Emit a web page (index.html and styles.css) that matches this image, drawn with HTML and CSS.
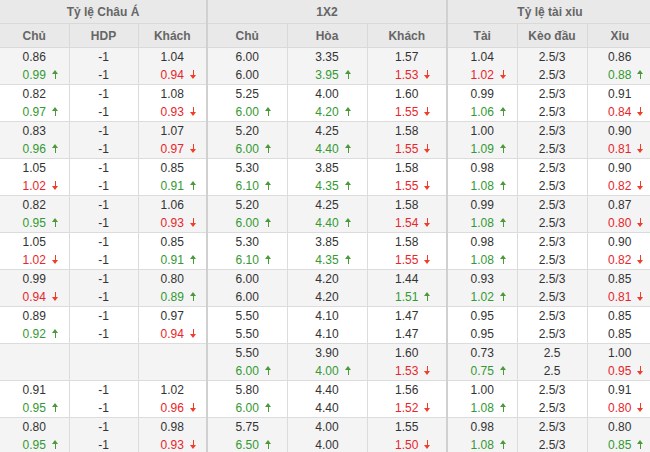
FILE: index.html
```html
<!DOCTYPE html>
<html lang="vi">
<head>
<meta charset="utf-8">
<title>Odds</title>
<link rel="stylesheet" href="styles.css">
</head>
<body>
<table class="odds">
  <colgroup>
    <col class="c1"><col class="c1"><col class="c1">
    <col class="c2"><col class="c2"><col class="c2">
    <col class="c3"><col class="c3"><col class="c4">
  </colgroup>
  <thead>
    <tr class="grp">
      <th colspan="3" class="gend">Tỷ lệ Châu Á</th>
      <th colspan="3" class="gend">1X2</th>
      <th colspan="3">Tỷ lệ tài xỉu</th>
    </tr>
    <tr class="sub">
      <th>Chủ</th><th>HDP</th><th class="gend">Khách</th>
      <th>Chủ</th><th>Hòa</th><th class="gend">Khách</th>
      <th>Tài</th><th>Kèo đầu</th><th>Xỉu</th>
    </tr>
  </thead>
  <tbody>
    <tr class="alt">
      <td><div>0.86</div><div class="up"><span class="v">0.99</span></div></td>
      <td><div>-1</div><div>-1</div></td>
      <td class="gend"><div>1.04</div><div class="dn"><span class="v">0.94</span></div></td>
      <td><div>6.00</div><div>6.00</div></td>
      <td><div>3.35</div><div class="up"><span class="v">3.95</span></div></td>
      <td class="gend"><div>1.57</div><div class="dn"><span class="v">1.53</span></div></td>
      <td><div>1.04</div><div class="dn"><span class="v">1.02</span></div></td>
      <td><div>2.5/3</div><div>2.5/3</div></td>
      <td><div>0.86</div><div class="up"><span class="v">0.88</span></div></td>
    </tr>
    <tr>
      <td><div>0.82</div><div class="up"><span class="v">0.97</span></div></td>
      <td><div>-1</div><div>-1</div></td>
      <td class="gend"><div>1.08</div><div class="dn"><span class="v">0.93</span></div></td>
      <td><div>5.25</div><div class="up"><span class="v">6.00</span></div></td>
      <td><div>4.00</div><div class="up"><span class="v">4.20</span></div></td>
      <td class="gend"><div>1.60</div><div class="dn"><span class="v">1.55</span></div></td>
      <td><div>0.99</div><div class="up"><span class="v">1.06</span></div></td>
      <td><div>2.5/3</div><div>2.5/3</div></td>
      <td><div>0.91</div><div class="dn"><span class="v">0.84</span></div></td>
    </tr>
    <tr class="alt">
      <td><div>0.83</div><div class="up"><span class="v">0.96</span></div></td>
      <td><div>-1</div><div>-1</div></td>
      <td class="gend"><div>1.07</div><div class="dn"><span class="v">0.97</span></div></td>
      <td><div>5.20</div><div class="up"><span class="v">6.00</span></div></td>
      <td><div>4.25</div><div class="up"><span class="v">4.40</span></div></td>
      <td class="gend"><div>1.58</div><div class="dn"><span class="v">1.55</span></div></td>
      <td><div>1.00</div><div class="up"><span class="v">1.09</span></div></td>
      <td><div>2.5/3</div><div>2.5/3</div></td>
      <td><div>0.90</div><div class="dn"><span class="v">0.81</span></div></td>
    </tr>
    <tr>
      <td><div>1.05</div><div class="dn"><span class="v">1.02</span></div></td>
      <td><div>-1</div><div>-1</div></td>
      <td class="gend"><div>0.85</div><div class="up"><span class="v">0.91</span></div></td>
      <td><div>5.30</div><div class="up"><span class="v">6.10</span></div></td>
      <td><div>3.85</div><div class="up"><span class="v">4.35</span></div></td>
      <td class="gend"><div>1.58</div><div class="dn"><span class="v">1.55</span></div></td>
      <td><div>0.98</div><div class="up"><span class="v">1.08</span></div></td>
      <td><div>2.5/3</div><div>2.5/3</div></td>
      <td><div>0.90</div><div class="dn"><span class="v">0.82</span></div></td>
    </tr>
    <tr class="alt">
      <td><div>0.82</div><div class="up"><span class="v">0.95</span></div></td>
      <td><div>-1</div><div>-1</div></td>
      <td class="gend"><div>1.06</div><div class="dn"><span class="v">0.93</span></div></td>
      <td><div>5.20</div><div class="up"><span class="v">6.00</span></div></td>
      <td><div>4.25</div><div class="up"><span class="v">4.40</span></div></td>
      <td class="gend"><div>1.58</div><div class="dn"><span class="v">1.54</span></div></td>
      <td><div>0.99</div><div class="up"><span class="v">1.08</span></div></td>
      <td><div>2.5/3</div><div>2.5/3</div></td>
      <td><div>0.87</div><div class="dn"><span class="v">0.80</span></div></td>
    </tr>
    <tr>
      <td><div>1.05</div><div class="dn"><span class="v">1.02</span></div></td>
      <td><div>-1</div><div>-1</div></td>
      <td class="gend"><div>0.85</div><div class="up"><span class="v">0.91</span></div></td>
      <td><div>5.30</div><div class="up"><span class="v">6.10</span></div></td>
      <td><div>3.85</div><div class="up"><span class="v">4.35</span></div></td>
      <td class="gend"><div>1.58</div><div class="dn"><span class="v">1.55</span></div></td>
      <td><div>0.98</div><div class="up"><span class="v">1.08</span></div></td>
      <td><div>2.5/3</div><div>2.5/3</div></td>
      <td><div>0.90</div><div class="dn"><span class="v">0.82</span></div></td>
    </tr>
    <tr class="alt">
      <td><div>0.99</div><div class="dn"><span class="v">0.94</span></div></td>
      <td><div>-1</div><div>-1</div></td>
      <td class="gend"><div>0.80</div><div class="up"><span class="v">0.89</span></div></td>
      <td><div>6.00</div><div>6.00</div></td>
      <td><div>4.20</div><div>4.20</div></td>
      <td class="gend"><div>1.44</div><div class="up"><span class="v">1.51</span></div></td>
      <td><div>0.93</div><div class="up"><span class="v">1.02</span></div></td>
      <td><div>2.5/3</div><div>2.5/3</div></td>
      <td><div>0.85</div><div class="dn"><span class="v">0.81</span></div></td>
    </tr>
    <tr>
      <td><div>0.89</div><div class="up"><span class="v">0.92</span></div></td>
      <td><div>-1</div><div>-1</div></td>
      <td class="gend"><div>0.97</div><div class="dn"><span class="v">0.94</span></div></td>
      <td><div>5.50</div><div>5.50</div></td>
      <td><div>4.10</div><div>4.10</div></td>
      <td class="gend"><div>1.47</div><div>1.47</div></td>
      <td><div>0.95</div><div>0.95</div></td>
      <td><div>2.5/3</div><div>2.5/3</div></td>
      <td><div>0.85</div><div>0.85</div></td>
    </tr>
    <tr class="alt">
      <td></td>
      <td></td>
      <td class="gend"></td>
      <td><div>5.50</div><div class="up"><span class="v">6.00</span></div></td>
      <td><div>3.90</div><div class="up"><span class="v">4.00</span></div></td>
      <td class="gend"><div>1.60</div><div class="dn"><span class="v">1.53</span></div></td>
      <td><div>0.73</div><div class="up"><span class="v">0.75</span></div></td>
      <td><div>2.5</div><div>2.5</div></td>
      <td><div>1.00</div><div class="dn"><span class="v">0.95</span></div></td>
    </tr>
    <tr>
      <td><div>0.91</div><div class="up"><span class="v">0.95</span></div></td>
      <td><div>-1</div><div>-1</div></td>
      <td class="gend"><div>1.02</div><div class="dn"><span class="v">0.96</span></div></td>
      <td><div>5.80</div><div class="up"><span class="v">6.00</span></div></td>
      <td><div>4.40</div><div>4.40</div></td>
      <td class="gend"><div>1.56</div><div class="dn"><span class="v">1.52</span></div></td>
      <td><div>1.00</div><div class="up"><span class="v">1.08</span></div></td>
      <td><div>2.5/3</div><div>2.5/3</div></td>
      <td><div>0.91</div><div class="dn"><span class="v">0.80</span></div></td>
    </tr>
    <tr class="alt">
      <td><div>0.80</div><div class="up"><span class="v">0.95</span></div></td>
      <td><div>-1</div><div>-1</div></td>
      <td class="gend"><div>0.98</div><div class="dn"><span class="v">0.93</span></div></td>
      <td><div>5.75</div><div class="up"><span class="v">6.50</span></div></td>
      <td><div>4.00</div><div>4.00</div></td>
      <td class="gend"><div>1.55</div><div class="dn"><span class="v">1.50</span></div></td>
      <td><div>0.98</div><div class="up"><span class="v">1.08</span></div></td>
      <td><div>2.5/3</div><div>2.5/3</div></td>
      <td><div>0.80</div><div class="up"><span class="v">0.85</span></div></td>
    </tr>
  </tbody>
</table>
</body>
</html>
```
FILE: styles.css
```css
html, body {
  margin: 0;
  padding: 0;
  background: #ffffff;
}
body {
  font-family: "Liberation Sans", Arial, sans-serif;
  font-size: 12px;
  color: #333333;
}
.odds {
  border-collapse: collapse;
  table-layout: fixed;
  width: 650px;
}
.c1 { width: 69px; }
.c2 { width: 80px; }
.c3 { width: 70px; }
.c4 { width: 65px; }
.odds th {
  background: #e9e9e9;
  color: #666666;
  font-weight: bold;
  font-size: 12px;
  height: 23px;
  padding: 0;
  text-align: center;
  border-right: 1px solid #d9d9d9;
  border-bottom: 1px solid #d9d9d9;
}
.odds td {
  height: 36px;
  padding: 0;
  text-align: center;
  vertical-align: middle;
  border-right: 1px solid #dcdcdc;
  border-bottom: 1px solid #dcdcdc;
  line-height: 18px;
}
.odds th.gend, .odds td.gend {
  border-right: 2px solid #d0d0d0;
}
.odds th:last-child, .odds td:last-child {
  border-right: none;
}
.odds tr.alt td {
  background: #f4f4f4;
}
.up { color: #339933; }
.dn { color: #e8252b; }
.v {
  position: relative;
  display: inline-block;
}
.up .v::before,
.dn .v::before {
  content: "";
  position: absolute;
  left: calc(100% + 6px);
  width: 0;
  height: 0;
  border-left: 3.5px solid transparent;
  border-right: 3.5px solid transparent;
}
.up .v::after,
.dn .v::after {
  content: "";
  position: absolute;
  left: calc(100% + 9px);
  width: 1px;
  height: 5px;
}
.up .v::before {
  top: 4px;
  border-bottom: 4px solid #4a9a3a;
}
.up .v::after {
  top: 8px;
  background: #4a9a3a;
}
.dn .v::before {
  top: 9px;
  border-top: 4px solid #f03c28;
}
.dn .v::after {
  top: 4px;
  background: #f03c28;
}
```
